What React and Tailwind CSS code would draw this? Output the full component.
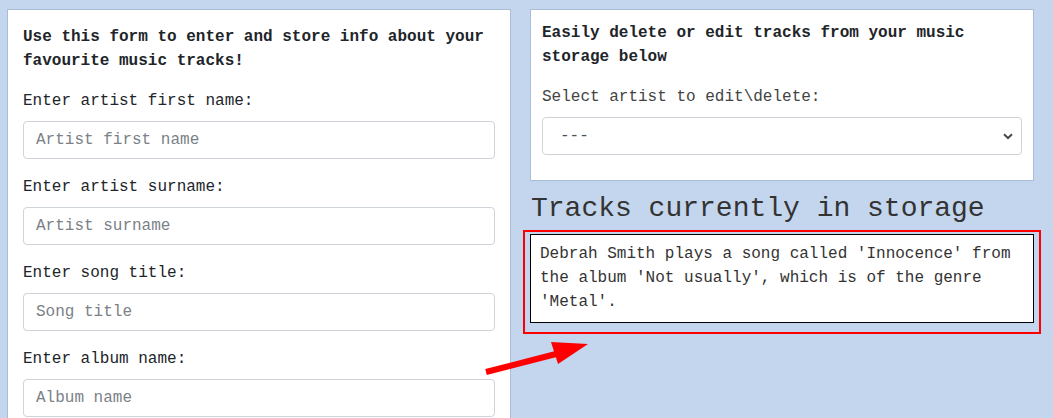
import React from 'react';

const Field = ({ label, placeholder }) => (
  <div className="mb-4">
    <label className="block leading-6 mb-2 text-[#212529]">{label}</label>
    <input
      type="text"
      placeholder={placeholder}
      className="block w-full h-[38px] px-3 border border-[#ced4da] rounded-[4px] bg-white text-[16px] placeholder:text-[#7b8187] focus:outline-none"
    />
  </div>
);

const App = () => {
  return (
    <div
      className="relative h-[418px] overflow-hidden bg-[#c3d6ed] flex gap-[19px] pl-[7px] pt-[9px] text-[16px]"
      style={{ fontFamily: '"Liberation Mono", "Courier New", monospace' }}
    >
      {/* left: add track form */}
      <div className="w-[504px] h-[470px] shrink-0 bg-white border border-[#aabdd7] px-[15px] pt-[15px]">
        <p className="font-bold leading-6 mb-4 text-[#212529]">
          Use this form to enter and store info about your favourite music tracks!
        </p>
        <Field label="Enter artist first name:" placeholder="Artist first name" />
        <Field label="Enter artist surname:" placeholder="Artist surname" />
        <Field label="Enter song title:" placeholder="Song title" />
        <Field label="Enter album name:" placeholder="Album name" />
      </div>

      {/* right: edit / list */}
      <div className="w-[504px] shrink-0 flex flex-col">
        <div className="bg-white border border-[#aabdd7] px-[11px] pt-[11px] pb-[9px]">
          <p className="font-bold leading-6 mb-4 text-[#212529]">
            Easily delete or edit tracks from your music storage below
          </p>
          <label className="block leading-6 mb-2 text-[#444]">Select artist to edit\delete:</label>
          <div className="relative mb-4">
            <select className="block w-full h-[38px] appearance-none pl-[17px] pr-8 border border-[#ced4da] rounded-[4px] bg-white text-[16px] text-[#495057] focus:outline-none">
              <option>---</option>
            </select>
            <svg
              className="absolute right-[9px] top-[16px] pointer-events-none"
              width="10"
              height="7"
              viewBox="0 0 10 7"
            >
              <path d="M1 1.2 L5 5 L9 1.2" fill="none" stroke="#4a4a4a" strokeWidth="2" />
            </svg>
          </div>
        </div>

        <h2 className="mt-[11px] pl-[1px] text-[28px] leading-[34px] text-[#333]">
          Tracks currently in storage
        </h2>

        <div className="relative mt-[8px] bg-white border border-black px-[9px] pt-[7px] pb-[8px] leading-6 text-[#333]">
          Debrah Smith plays a song called 'Innocence' from the album 'Not usually', which is of the genre 'Metal'.
          <div className="absolute -left-[8px] -right-[8px] -top-[5px] -bottom-[12px] border-2 border-[#ff0000] pointer-events-none" />
        </div>
      </div>

      {/* annotation arrow */}
      <svg
        className="absolute left-[480px] top-[330px] pointer-events-none"
        width="110"
        height="50"
        viewBox="0 0 110 50"
      >
        <line x1="6" y1="42" x2="76" y2="24" stroke="#ff0000" strokeWidth="6" />
        <polygon points="71,12 108,14 78,34" fill="#ff0000" />
      </svg>
    </div>
  );
};

export default App;
